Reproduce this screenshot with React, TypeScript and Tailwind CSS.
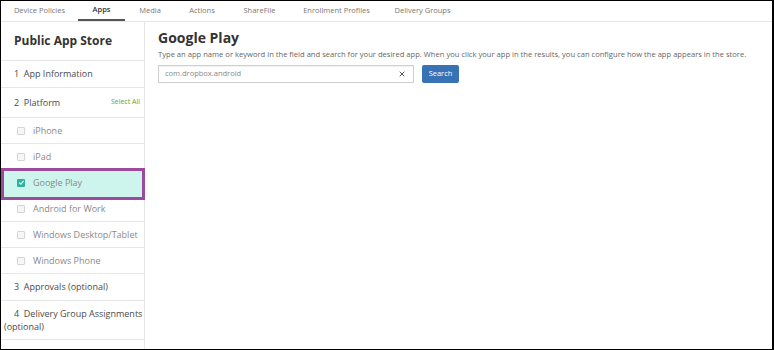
import React from 'react';
import { X } from 'lucide-react';

const tabs = [
  { label: 'Device Policies', w: 'w-[77px]' },
  { label: 'Apps', w: 'w-[47px]', active: true },
  { label: 'Media', w: 'w-[50px]' },
  { label: 'Actions', w: 'w-[54px]' },
  { label: 'ShareFile', w: 'w-[61px]' },
  { label: 'Enrollment Profiles', w: 'w-[93px]' },
  { label: 'Delivery Groups', w: 'w-[79px]' },
];

const platforms = [
  { label: 'iPhone' },
  { label: 'iPad' },
  { label: 'Google Play', checked: true },
  { label: 'Android for Work' },
  { label: 'Windows Desktop/Tablet' },
  { label: 'Windows Phone' },
];

const Checkbox: React.FC<{ checked?: boolean }> = ({ checked }) =>
  checked ? (
    <span className="flex h-[8px] w-[8px] items-center justify-center rounded-[1px] bg-[#2bb3a0]">
      <svg viewBox="0 0 10 10" className="h-[7px] w-[7px]">
        <path d="M2 5.2 L4.2 7.3 L8 2.8" fill="none" stroke="#fff" strokeWidth="1.8" />
      </svg>
    </span>
  ) : (
    <span className="h-[8px] w-[8px] rounded-[1px] border border-[#d4d4d4] bg-[#f6f6f6]" />
  );

export default function App() {
  return (
    <div
      className="flex h-[350px] w-[774px] flex-col overflow-hidden border border-r-2 border-black bg-white text-[#555]"
      style={{ fontFamily: '"Open Sans", "Liberation Sans", sans-serif' }}
    >
      {/* tab bar */}
      <div className="flex h-[21px] shrink-0 border-b border-[#e6e6e6]">
        {tabs.map((t) => (
          <div
            key={t.label}
            className={`${t.w} flex items-center justify-center text-[7.5px] ${
              t.active ? 'border-b-2 border-[#555] font-semibold text-[#333]' : 'text-[#777]'
            }`}
          >
            {t.label}
          </div>
        ))}
      </div>

      <div className="flex min-h-0 flex-1">
        {/* sidebar */}
        <div className="flex w-[144px] shrink-0 flex-col border-r border-[#e6e6e6]">
          <div className="flex h-[39px] items-center border-b border-[#e6e6e6] pl-[13px] text-[12px] font-bold text-[#333]">
            Public App Store
          </div>
          <div className="flex h-[27px] items-center border-b border-[#e6e6e6] pl-[13px] text-[9px] text-[#4a4a4a]">
            1&nbsp;&nbsp;App Information
          </div>
          <div className="flex h-[30px] items-center justify-between border-b border-[#e6e6e6] pl-[13px] pr-[4px] text-[9px] text-[#4a4a4a]">
            <span>2&nbsp;&nbsp;Platform</span>
            <span className="text-[7px] text-[#5fa33a]">Select All</span>
          </div>
          {platforms.map((p) => (
            <div
              key={p.label}
              className="relative flex h-[26px] items-center border-b border-[#e6e6e6] pl-[16px] text-[9px] text-[#8a8a8a]"
            >
              {p.checked && (
                <div className="absolute -top-[2px] -bottom-[5px] left-0 -right-[1px] border-[3px] border-[#9b4a9d] bg-[#cdf4ed]" />
              )}
              <div className="relative flex items-center gap-[8px]">
                <Checkbox checked={p.checked} />
                <span>{p.label}</span>
              </div>
            </div>
          ))}
          <div className="flex h-[27px] items-center border-b border-[#e6e6e6] pl-[13px] text-[9px] text-[#4a4a4a]">
            3&nbsp;&nbsp;Approvals (optional)
          </div>
          <div className="flex h-[39px] items-center border-b border-[#e6e6e6] pl-[3px] text-[9px] leading-[13px] text-[#4a4a4a]">
            <span className="whitespace-nowrap">
              <span className="pl-[10px]">4&nbsp;&nbsp;Delivery Group Assignments</span>
              <br />
              (optional)
            </span>
          </div>
        </div>

        {/* main */}
        <div className="flex-1 pl-[13px] pt-[6px]">
          <div className="text-[14px] font-bold leading-[20px] text-[#333]">Google Play</div>
          <div className="mt-[1px] text-[7.6px] leading-[10px] text-[#666]">
            Type an app name or keyword in the field and search for your desired app. When you click your app in the results, you can configure how the app appears in the store.
          </div>
          <div className="mt-[6px] flex items-center gap-[8px]">
            <div className="flex h-[18px] w-[256px] items-center justify-between border border-[#cfcfcf] pl-[6px] pr-[7px] shadow-[inset_0_1px_1px_rgba(0,0,0,0.06)]">
              <span className="text-[7.5px] text-[#888]">com.dropbox.android</span>
              <X className="h-[8px] w-[8px] text-[#555]" strokeWidth={3} />
            </div>
            <button className="flex h-[18px] w-[37px] items-center justify-center rounded-[2px] bg-[#3772b5] text-[7.5px] text-white">
              Search
            </button>
          </div>
        </div>
      </div>
    </div>
  );
}
